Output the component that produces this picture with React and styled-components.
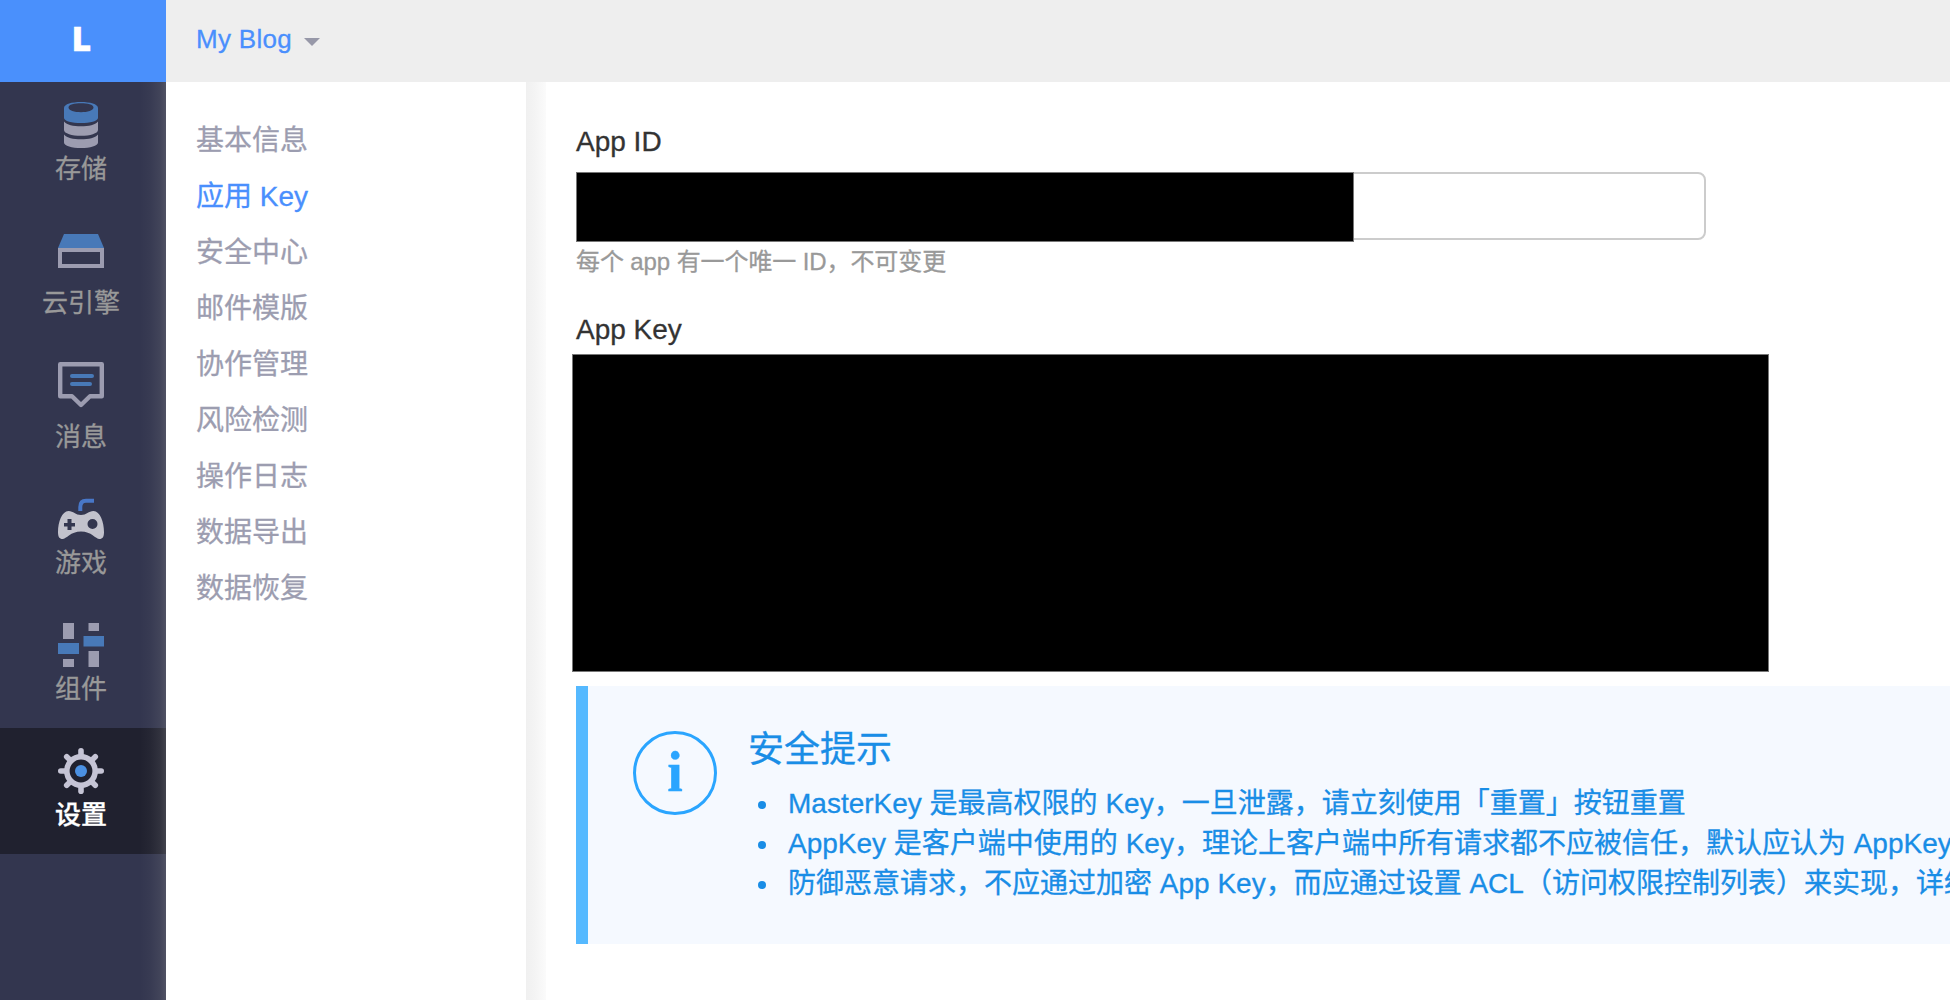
import React from "react";
import styled, { createGlobalStyle } from "styled-components";

const GlobalStyle = createGlobalStyle`
  *, *::before, *::after { box-sizing: border-box; }
  body {
    margin: 0;
    background: #fff;
    font-family: "Liberation Sans", "Noto Sans CJK SC", sans-serif;
    -webkit-text-stroke: 0.3px currentColor;
    overflow: hidden;
  }
`;

const Page = styled.div`
  display: flex;
  height: 1000px;
  overflow: hidden;
`;

const Sidebar = styled.nav`
  flex: 0 0 166px;
  display: flex;
  flex-direction: column;
  background: #33364f;
  position: relative;

  &::after {
    content: "";
    position: absolute;
    top: 82px;
    right: 0;
    bottom: 0;
    width: 26px;
    background: linear-gradient(
      to right,
      rgba(150, 150, 150, 0),
      rgba(150, 150, 150, 0.05) 40%,
      rgba(150, 150, 150, 0.14) 75%,
      rgba(150, 150, 150, 0.3)
    );
  }
`;

const Logo = styled.div`
  height: 82px;
  padding: 0 3px 5px 0;
  display: flex;
  align-items: center;
  justify-content: center;
  background: #4a90fc;
  color: #fff;
  font: 800 34px/77px "Open Sans", sans-serif;
`;

const NavItem = styled.a`
  display: flex;
  flex-direction: column;
  align-items: center;
  padding: 20px 4px 19px 0;
  background: ${(p) => (p.$active ? "#20212f" : "transparent")};
  color: ${(p) => (p.$active ? "#fff" : "#999")};
  font-weight: ${(p) => (p.$active ? 500 : 400)};
  font-size: 26px;
  line-height: 40px;
`;

const NavIcon = styled.svg`
  display: block;
  width: 46px;
  height: ${(p) => p.$tall || 46}px;
  margin-bottom: 1px;
`;

const Main = styled.div`
  flex: 1;
  min-width: 0;
  display: flex;
  flex-direction: column;
`;

const TopBar = styled.header`
  flex: 0 0 82px;
  display: flex;
  align-items: center;
  gap: 12px;
  padding: 0 30px 4px;
  background: #eee;
  color: #4a8ffd;
  font-size: 26px;
  line-height: 36px;
  letter-spacing: 0.3px;
`;

const Caret = styled.span`
  margin-top: 6px;
  border: 8px solid transparent;
  border-top-color: #9798a8;
  border-bottom: 0;
`;

const Body = styled.div`
  flex: 1;
  min-height: 0;
  display: flex;
`;

const SubMenu = styled.ul`
  flex: 0 0 360px;
  margin: 0;
  padding: 31px 30px 30px;
  list-style: none;
`;

const SubMenuItem = styled.li`
  height: 56px;
  font-size: 28px;
  line-height: 56px;
  color: ${(p) => (p.$active ? "#4a8ffd" : "#9c9db0")};
`;

const Divider = styled.div`
  flex: 0 0 20px;
  background: linear-gradient(to right, #f0f0f0, #f4f4f4 45%, #fbfbfb);
`;

const Content = styled.main`
  flex: 1;
  min-width: 0;
  padding: 40px 0 0 30px;
`;

const Label = styled.div`
  height: 40px;
  font-size: 28px;
  line-height: 40px;
  color: #333;
`;

const Field = styled.div`
  width: 1130px;
  height: 68px;
  margin-top: 10px;
  border: 2px solid #ccc;
  border-radius: 8px;
`;

const Mask = styled.div`
  width: ${(p) => p.$w}px;
  height: ${(p) => p.$h}px;
  margin: ${(p) => p.$m};
  background: #000;
  border: 1px solid #777;
`;

const Help = styled.div`
  height: 34px;
  margin: 5px 0 31px;
  font-size: 24px;
  line-height: 34px;
  letter-spacing: -0.1px;
  color: #999;
`;

const Alert = styled.section`
  display: flex;
  gap: 31px;
  height: 258px;
  margin-top: 14px;
  padding: 45px 0 0 45px;
  border-left: 12px solid #55b9ff;
  background: #f5f9ff;
  color: #198de6;
  overflow: hidden;
`;

const InfoBadge = styled.div`
  flex: 0 0 84px;
  height: 84px;
  border: 3px solid #2aa5ff;
  border-radius: 50%;
  color: #2aa5ff;
  text-align: center;
  font: bold 56px/77px "Liberation Serif", serif;
`;

const AlertBody = styled.div`
  flex: 1;
  min-width: 0;
  padding-top: 1px;
`;

const AlertTitle = styled.div`
  height: 52px;
  font-size: 36px;
  line-height: 36px;
`;

const Tips = styled.ul`
  margin: 0;
  padding: 0;
  list-style: none;
  font-size: 28px;
  line-height: 40px;
  white-space: nowrap;
`;

const Tip = styled.li`
  display: flex;
  align-items: center;
  height: 40px;

  &::before {
    content: "";
    flex: none;
    width: 8px;
    height: 8px;
    margin: 2px 22px 0 10px;
    border-radius: 50%;
    background: currentColor;
  }
`;

const BLUE = "#4879b8";
const GREY = "#9c9cb0";

const StorageIcon = () => (
  <NavIcon viewBox="0 0 46 46">
    <path fill={BLUE} fillRule="evenodd" d="M6 6C6 2 14 0 23 0s17 2 17 6v10c0 3-8 5-17 5S6 19 6 16zM10.500 5.500c0 3 6 4.700 12.500 4.700s12.500-1.700 12.500-4.700S29.500 1.200 23 1.200 10.500 2.500 10.500 5.500z" />
    <path fill={GREY} d="M6 19.500c3 3.500 9 4.800 17 4.800s14-1.300 17-4.800V28c0 3.500-8 5.800-17 5.800S6 31.500 6 28zM6 32.500c3 3.500 9 4.800 17 4.800s14-1.300 17-4.800V40.500c0 3.500-8 5.500-17 5.500S6 44 6 40.500z" />
  </NavIcon>
);

const EngineIcon = () => (
  <NavIcon viewBox="0 0 46 54" $tall={54}>
    <path fill={BLUE} d="M6 6h34l6 14H0z" />
    <path fill={GREY} fillRule="evenodd" d="M0 20h46v20H0zM4 24v12h38V24z" />
  </NavIcon>
);

const MessageIcon = () => (
  <NavIcon viewBox="0 0 46 54" $tall={54} fill="none">
    <path stroke={GREY} strokeWidth="4.400" strokeLinejoin="round" d="M2.200 2.200h41.600v32H32L23 43l-9-8.800H2.200z" />
    <path stroke={BLUE} strokeWidth="4" strokeLinecap="round" d="M14 14h20M14 22h18" />
  </NavIcon>
);

const GameIcon = () => (
  <NavIcon viewBox="0 0 46 46">
    <path fill="none" stroke="#4877c8" strokeWidth="4" d="M22.300 15V11Q22.300 4.700 28 4.700H36" />
    <path fill="#c2c2cc" fillRule="evenodd" d="M10.500 15c5 0 7 4 12.500 4s7.500-4 12.500-4C42 15 46 26 46 36c0 5-1.500 7-4.500 7-4 0-8-7.500-18.500-7.500S8.500 43 4.500 43C1.500 43 0 41 0 36c0-10 4-21 10.500-21zM9.500 23v4H6v3.500h3.500V34h4v-3.500H17V27h-3.500v-4zM34.500 23a5 5 0 1 0 0 10a5 5 0 1 0 0-10z" />
  </NavIcon>
);

const WidgetIcon = () => (
  <NavIcon viewBox="0 0 46 46">
    <path fill={GREY} d="M5 1h11v16H5zM5 37h11v8H5zM30.500 1H41v8H30.500zM30.500 29H41v16H30.500z" />
    <path fill={BLUE} d="M0 21h21v11H0zM25.500 14H46v10.500H25.500z" />
  </NavIcon>
);

const GearIcon = () => (
  <NavIcon viewBox="0 0 46 46" fill="none" stroke="#c5c4d5">
    <circle cx="23" cy="23" r="14.200" strokeWidth="5.600" />
    <g strokeWidth="5.600" strokeLinecap="round">
      {[0, 45, 90, 135, 180, 225, 270, 315].map((a) => (
        <path key={a} d="M23 2.800V8" transform={`rotate(${a} 23 23)`} />
      ))}
    </g>
    <circle cx="23" cy="23" r="6" fill="#4b90e2" stroke="none" />
  </NavIcon>
);

const NAV = [
  ["存储", StorageIcon],
  ["云引擎", EngineIcon],
  ["消息", MessageIcon],
  ["游戏", GameIcon],
  ["组件", WidgetIcon],
  ["设置", GearIcon],
];

const MENU = [
  "基本信息",
  "应用 Key",
  "安全中心",
  "邮件模版",
  "协作管理",
  "风险检测",
  "操作日志",
  "数据导出",
  "数据恢复",
];

const TIPS = [
  "MasterKey 是最高权限的 Key，一旦泄露，请立刻使用「重置」按钮重置",
  "AppKey 是客户端中使用的 Key，理论上客户端中所有请求都不应被信任，默认应认为 AppKey",
  "防御恶意请求，不应通过加密 App Key，而应通过设置 ACL（访问权限控制列表）来实现，详细",
];

export default function App() {
  return (
    <>
      <GlobalStyle />
      <Page lang="zh-CN">
        <Sidebar>
          <Logo>L</Logo>
          {NAV.map(([name, Icon]) => (
            <NavItem key={name} $active={name === "设置"}>
              <Icon />
              {name}
            </NavItem>
          ))}
        </Sidebar>
        <Main>
          <TopBar>
            My Blog
            <Caret />
          </TopBar>
          <Body>
            <SubMenu>
              {MENU.map((name) => (
                <SubMenuItem key={name} $active={name === "应用 Key"}>
                  {name}
                </SubMenuItem>
              ))}
            </SubMenu>
            <Divider />
            <Content>
              <Label>App ID</Label>
              <Field>
                <Mask $w={778} $h={70} $m="-2px 0 0 -2px" />
              </Field>
              <Help>每个 app 有一个唯一 ID，不可变更</Help>
              <Label>App Key</Label>
              <Mask $w={1197} $h={318} $m="4px 0 0 -4px" />
              <Alert>
                <InfoBadge>i</InfoBadge>
                <AlertBody>
                  <AlertTitle>安全提示</AlertTitle>
                  <Tips>
                    {TIPS.map((tip) => (
                      <Tip key={tip}>{tip}</Tip>
                    ))}
                  </Tips>
                </AlertBody>
              </Alert>
            </Content>
          </Body>
        </Main>
      </Page>
    </>
  );
}
